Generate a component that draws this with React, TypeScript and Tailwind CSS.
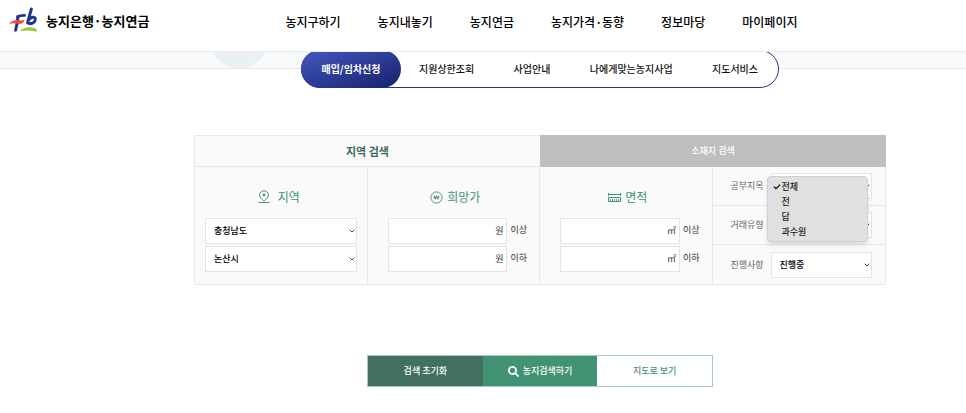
import React, { useState } from "react";
import { Check, ChevronDown } from "lucide-react";
import { FaSearch } from "react-icons/fa";

const menus = [
  "농지구하기",
  "농지내놓기",
  "농지연금",
  "농지가격·동향",
  "정보마당",
  "마이페이지",
];

const tabs = ["지원상한조회", "사업안내", "나에게맞는농지사업", "지도서비스"];

const landTypes = ["전체", "전", "답", "과수원"];

export default function App() {
  return (
    <div className="min-h-screen overflow-x-hidden bg-white text-black font-['Noto_Sans_CJK_KR',sans-serif]">
      <Header />
      <div className="relative h-[17px] overflow-hidden border-b border-[#e4e8ec] bg-[#f7f9fb]">
        <span className="absolute bottom-0 left-[209px] size-[60px] rounded-full bg-[#e9f1f4]" />
      </div>
      <main className="relative flex flex-col items-center pl-[114px]">
        <Tabs />
        <SearchPanel />
        <Actions />
      </main>
    </div>
  );
}

function Header() {
  return (
    <header className="relative z-10 flex h-[52px] items-start border-b border-[#ececec] bg-white pl-2">
      <a href="#" className="mt-[5px] flex h-8 items-center gap-2">
        <Logo />
        <span className="whitespace-nowrap text-[13px] font-bold leading-8">
          농지은행·농지연금
        </span>
      </a>
      <nav className="ml-[136px] mt-3 flex gap-[37px] whitespace-nowrap text-[12px] font-medium leading-5">
        {menus.map((menu) => (
          <a key={menu} href="#">
            {menu}
          </a>
        ))}
      </nav>
    </header>
  );
}

function Logo() {
  return (
    <svg width="30" height="28" viewBox="0 0 30 28" fill="none">
      <path
        d="M10 9.5C9.6 14 8.8 19 7.6 23.2"
        stroke="#1f3690"
        strokeWidth="3"
        strokeLinecap="round"
      />
      <path
        d="M9.6 9.8C11.5 8.6 14 8.3 16.6 8.4"
        stroke="#1f3690"
        strokeWidth="2.6"
        strokeLinecap="round"
      />
      <path
        d="M23.4 2C22.2 6.5 20.6 11.5 19.6 15.8C22 17.4 26.4 16.6 27.2 13C27.8 9.8 24.2 9.2 21.6 12"
        stroke="#1f3690"
        strokeWidth="3"
        strokeLinecap="round"
        strokeLinejoin="round"
      />
      <path
        d="M1 16.8C4 13.2 8 12.4 11.5 13.2C13.5 13.6 15.2 13.4 16.6 12.8C16 15.8 13.4 17.4 10.4 16.8C7 16.1 4 16 1 16.8Z"
        fill="#ee4f27"
      />
      <path
        d="M12 24C16 19.6 24 19.4 28.6 22.2V24.8C23 23.2 17.5 23 12 24Z"
        fill="#97c93c"
      />
    </svg>
  );
}

function Tabs() {
  return (
    <nav className="-mt-[19px] flex h-[38px] w-[478px] items-stretch whitespace-nowrap rounded-full border border-[#27348b] bg-white text-[10px] font-medium leading-4">
      <a
        href="#"
        className="-my-px -ml-px flex w-[100px] shrink-0 items-center justify-center rounded-full bg-linear-to-br from-[#4558c2] to-[#17216b] font-bold text-white"
      >
        매입/임차신청
      </a>
      <div className="flex flex-1 items-center justify-between pl-[18px] pr-5 text-[#111]">
        {tabs.map((tab) => (
          <a key={tab} href="#">
            {tab}
          </a>
        ))}
      </div>
    </nav>
  );
}

function SearchPanel() {
  return (
    <form className="mt-[47px] w-[692px] border border-[#e8e8e8] bg-[#fafafa]">
      <div className="grid h-[31px] grid-cols-2">
        <button
          type="button"
          className="border-b border-[#e8e8e8] text-[11px] font-bold text-[#3b6b5d]"
        >
          지역 검색
        </button>
        <button
          type="button"
          className="-mr-px -mt-px bg-[#bfbfbf] text-[9px] font-medium text-white"
        >
          소재지 검색
        </button>
      </div>
      <div className="grid grid-cols-4 divide-x divide-[#e8e8e8]">
        <fieldset className="px-[10px] pb-[10px] pt-5">
          <Title icon={<PinIcon />} text="지역" className="gap-2 pr-1" />
          <div className="clear-both flex flex-col gap-[2px] pt-[11px]">
            <Dropdown label="시도" options={["충청남도"]} />
            <Dropdown label="시군구" options={["논산시"]} />
          </div>
        </fieldset>
        <RangeField icon={<WonIcon />} text="희망가" unit="원" />
        <RangeField icon={<AreaIcon />} text="면적" unit="㎡" />
        <div className="divide-y divide-[#e8e8e8]">
          <LandTypeRow />
          <Row label="거래유형">
            <Dropdown label="거래유형" options={["전체"]} />
          </Row>
          <Row label="진행사항">
            <Dropdown label="진행사항" options={["진행중"]} />
          </Row>
        </div>
      </div>
    </form>
  );
}

function Title({
  icon,
  text,
  className,
}: {
  icon: React.ReactNode;
  text: string;
  className: string;
}) {
  return (
    <legend
      className={`float-left flex h-5 w-full items-center justify-center text-[12px] text-[#429274] ${className}`}
    >
      {icon}
      {text}
    </legend>
  );
}

function Dropdown({ label, options }: { label: string; options: string[] }) {
  return (
    <div className="relative w-full">
      <select
        aria-label={label}
        className="block h-[26px] w-full appearance-none border border-[#e5e5e5] bg-white px-2 text-[9px] font-medium text-black"
      >
        {options.map((option) => (
          <option key={option}>{option}</option>
        ))}
      </select>
      <ChevronDown
        size={8}
        strokeWidth={3}
        className="pointer-events-none absolute right-px top-[9px] text-[#444]"
      />
    </div>
  );
}

function RangeField({
  icon,
  text,
  unit,
}: {
  icon: React.ReactNode;
  text: string;
  unit: string;
}) {
  return (
    <fieldset className="pb-[10px] pl-5 pr-3 pt-5">
      <Title icon={icon} text={text} className="gap-1 pr-1" />
      <div className="clear-both flex flex-col gap-[2px] pt-[11px]">
        {["이상", "이하"].map((bound) => (
          <label
            key={bound}
            className="flex items-start gap-[3px] whitespace-nowrap text-[9px] text-[#333]"
          >
            <span className="flex h-[26px] min-w-0 flex-1 items-center border border-[#e5e5e5] bg-white pr-[3px]">
              <input
                type="text"
                aria-label={`${text} ${bound}`}
                className="h-full w-full min-w-0 px-2 outline-none"
              />
              {unit}
            </span>
            <span className="leading-6">{bound}</span>
          </label>
        ))}
      </div>
    </fieldset>
  );
}

function Row({
  label,
  children,
}: {
  label: string;
  children: React.ReactNode;
}) {
  return (
    <div className="relative flex h-[39px] items-center pl-[18px] pr-[13px]">
      <span className="w-10 shrink-0 whitespace-nowrap text-[9px] text-[#666]">
        {label}
      </span>
      {children}
    </div>
  );
}

function LandTypeRow() {
  const [selected, setSelected] = useState("전체");

  return (
    <Row label="공부지목">
      <Dropdown label="공부지목" options={[selected]} />
      <ul
        role="listbox"
        aria-label="공부지목"
        className="absolute left-[54px] top-[9px] z-10 w-[101px] rounded-[4px] border border-[#cfcfcf] bg-[#e0e0e0] py-[2px] text-[9px] font-medium leading-[15px] text-[#222] shadow-md"
      >
        {landTypes.map((type) => (
          <li
            key={type}
            role="option"
            aria-selected={type === selected}
            onClick={() => setSelected(type)}
            className="flex items-center pl-[5px]"
          >
            <span className="w-[9px]">
              {type === selected && <Check size={8} strokeWidth={4} />}
            </span>
            {type}
          </li>
        ))}
      </ul>
    </Row>
  );
}

function Actions() {
  return (
    <div className="mt-[70px] grid h-[32px] w-[346px] grid-cols-3 whitespace-nowrap border border-[#a5cdbe] text-[9px] font-medium">
      <button type="button" className="bg-[#426f62] text-white">
        검색 초기화
      </button>
      <button
        type="button"
        className="flex items-center justify-center gap-1 bg-[#429274] text-white"
      >
        <FaSearch size={11} />
        농지검색하기
      </button>
      <button type="button" className="bg-white text-[#429274]">
        지도로 보기
      </button>
    </div>
  );
}

function PinIcon() {
  return (
    <svg width="12" height="14" viewBox="0 0 12 14" fill="none" stroke="#429274">
      <path d="M6 11.2C3.4 8.8 1.6 7.2 1.6 5A4.4 4.2 0 0 1 10.4 5C10.4 7.2 8.6 8.8 6 11.2Z" />
      <circle cx="6" cy="5" r="1" fill="#429274" />
      <path d="M0.5 12.5H11.5" />
    </svg>
  );
}

function WonIcon() {
  return (
    <svg width="13" height="13" viewBox="0 0 14 14" fill="none" stroke="#429274">
      <circle cx="7" cy="7" r="6" />
      <path d="M4.6 4.9L5.6 9L7 5.2L8.4 9L9.4 4.9" />
      <path d="M3.8 6.8H10.2" strokeWidth="0.9" />
    </svg>
  );
}

function AreaIcon() {
  return (
    <svg width="13" height="9" viewBox="0 0 13 9" fill="none" stroke="#429274">
      <path d="M0.5 0V3M12.5 0V3M0.5 1.5H12.5" />
      <path d="M0.5 4.5H12.5V8.5H0.5Z" />
      <path
        d="M2.5 6V8M4.5 6V8M6.5 6V8M8.5 6V8M10.5 6V8"
        strokeWidth="0.8"
      />
    </svg>
  );
}
